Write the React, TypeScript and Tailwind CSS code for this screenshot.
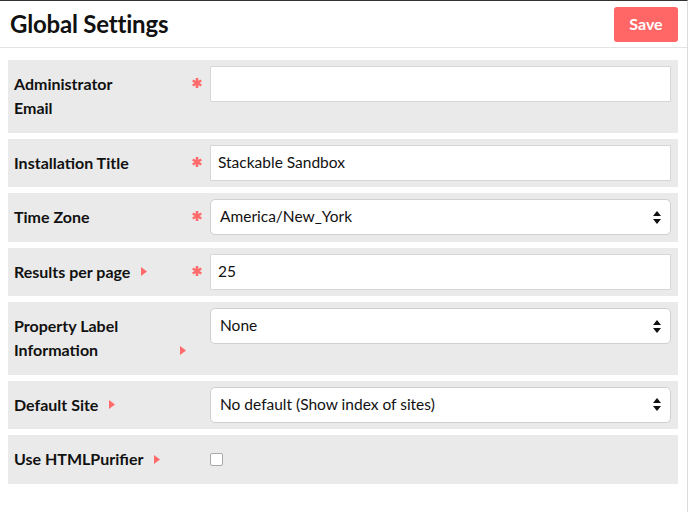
import React from 'react';

const font = { fontFamily: 'Lato, "Noto Sans", sans-serif' };

function Asterisk() {
  return (
    <svg width="10" height="10" viewBox="0 0 10 10" className="block">
      <g stroke="#ff6b6b" strokeWidth="2.6" strokeLinecap="butt">
        <line x1="5" y1="0" x2="5" y2="10" />
        <line x1="0.7" y1="2.5" x2="9.3" y2="7.5" />
        <line x1="0.7" y1="7.5" x2="9.3" y2="2.5" />
      </g>
    </svg>
  );
}

function Arrow({ className = '' }: { className?: string }) {
  return (
    <svg width="6" height="9" viewBox="0 0 6 9" className={`inline-block ${className}`}>
      <path d="M0 0 L6 4.5 L0 9 Z" fill="#ff6b6b" />
    </svg>
  );
}

function SelectArrows() {
  return (
    <svg width="8" height="13" viewBox="0 0 8 13" className="block">
      <path d="M4 0 L8 5 L0 5 Z" fill="#111" />
      <path d="M0 8 L8 8 L4 13 Z" fill="#111" />
    </svg>
  );
}

type Field = {
  lines: string[];
  required?: boolean;
  arrow?: 'inline' | 'side';
  kind: 'text' | 'select' | 'checkbox';
  value?: string;
};

const fields: Field[] = [
  { lines: ['Administrator', 'Email'], required: true, kind: 'text', value: '' },
  { lines: ['Installation Title'], required: true, kind: 'text', value: 'Stackable Sandbox' },
  { lines: ['Time Zone'], required: true, kind: 'select', value: 'America/New_York' },
  { lines: ['Results per page'], required: true, arrow: 'inline', kind: 'text', value: '25' },
  { lines: ['Property Label', 'Information'], arrow: 'side', kind: 'select', value: 'None' },
  { lines: ['Default Site'], arrow: 'inline', kind: 'select', value: 'No default (Show index of sites)' },
  { lines: ['Use HTMLPurifier'], arrow: 'inline', kind: 'checkbox' },
];

function Control({ f }: { f: Field }) {
  if (f.kind === 'checkbox') {
    return (
      <div className="h-9 flex items-center">
        <div className="w-[13px] h-[13px] bg-white border border-[#a8a8a8] rounded-[2px]" />
      </div>
    );
  }
  if (f.kind === 'select') {
    return (
      <div className="h-9 bg-white border border-[#cfcfcf] rounded-[5px] flex items-center justify-between pl-[9px] pr-[9px] text-[15.5px] text-[#111]">
        <span>{f.value}</span>
        <SelectArrows />
      </div>
    );
  }
  return (
    <div className="h-9 bg-white border border-[#d6d6d6] rounded-[1px] flex items-center pl-[7px] text-[15.5px] text-[#111]">
      {f.value}
    </div>
  );
}

export default function App() {
  return (
    <div className="w-[688px] min-h-[512px] bg-white border-t border-[#333] border-r border-r-[#dcdcdc]" style={font}>
      {/* Header */}
      <div className="h-[47px] flex items-center justify-between pl-[10px] pr-[9px] border-b border-[#e3e3e3]">
        <h1 className="text-[24px] font-bold text-[#111] tracking-[-0.2px]">Global Settings</h1>
        <button className="w-16 h-[35px] rounded-[3px] bg-[#ff6666] text-white font-bold text-[16px]">Save</button>
      </div>

      {/* Fields */}
      <div className="pl-2 pr-[9px] pt-3 flex flex-col gap-1.5">
        {fields.map((f, i) => (
          <div key={i} className="flex items-start bg-[#eaeaea]">
            <div className="w-[178px] pl-1.5 pt-3 pb-[12.5px] flex items-end">
              <div className="text-[16px] leading-6 font-bold text-[#111] whitespace-nowrap">
                {f.lines.map((l, j) => (
                  <div key={j} className="flex items-center">
                    {l}
                    {f.arrow === 'inline' && <Arrow className="ml-[11px]" />}
                  </div>
                ))}
              </div>
              {f.arrow === 'side' && (
                <div className="ml-auto h-6 flex items-center">
                  <Arrow />
                </div>
              )}
            </div>
            <div className="w-6 mt-[5px] h-9 flex items-center pl-[6px]">
              {f.required && <Asterisk />}
            </div>
            <div className="flex-1 py-1.5 pr-[7px]">
              <Control f={f} />
            </div>
          </div>
        ))}
      </div>
    </div>
  );
}
